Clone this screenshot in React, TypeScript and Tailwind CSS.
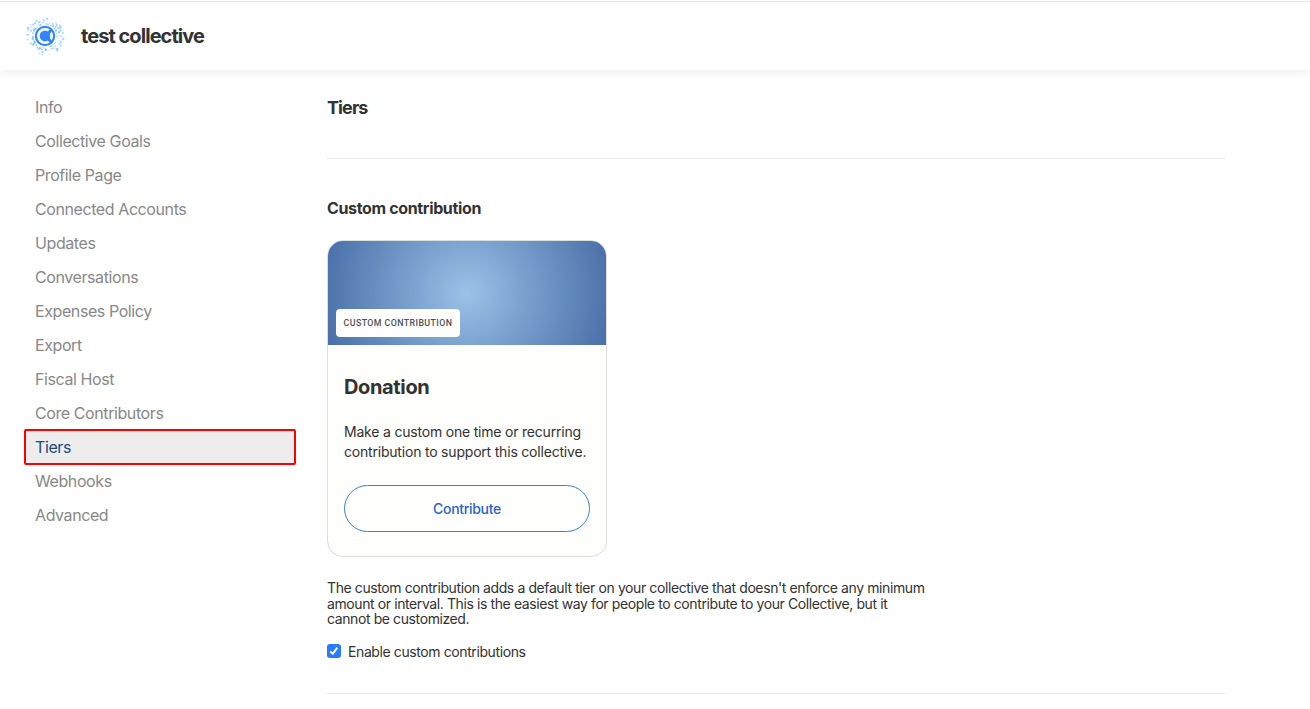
const navItems = [
  'Info',
  'Collective Goals',
  'Profile Page',
  'Connected Accounts',
  'Updates',
  'Conversations',
  'Expenses Policy',
  'Export',
  'Fiscal Host',
  'Core Contributors',
  'Tiers',
  'Webhooks',
  'Advanced',
];

const dots = Array.from({ length: 165 }, (_, i) => {
  const b = Math.abs(Math.sin(i * 78.233) * 24634.6345) % 1;
  const c = Math.abs(Math.sin(i * 39.425) * 11257.113) % 1;
  const angle = i * 2.39996 + c * 0.5;
  const radius = 11.5 + b ** 1.6 * 7.5;
  return {
    x: 20 + Math.cos(angle) * radius,
    y: 20 + Math.sin(angle) * radius,
    size: 1 + c * 0.9,
    opacity: 0.2 + c * 0.33,
  };
});

function Logo() {
  return (
    <svg className="size-10 shrink-0" viewBox="0 0 40 40" aria-hidden="true">
      {dots.map((d, i) => (
        <rect key={i} x={d.x - d.size / 2} y={d.y - d.size / 2} width={d.size} height={d.size} fill="#55aef8" opacity={d.opacity} />
      ))}
      <circle cx="20" cy="20" r="10.8" fill="#fff" />
      <circle cx="20" cy="20" r="9.1" fill="none" stroke="#3385ff" strokeWidth="2.2" />
      <circle cx="20" cy="20" r="5.4" fill="#3385ff" />
      <path d="M22 16.5 L25 13 L27 15 L24.5 18.5 Z M22 23.5 L25 27 L27 25 L24.5 21.5 Z" fill="#3385ff" />
      <path d="M26.2 17 Q27 20 26.2 23" fill="none" stroke="#fff" strokeWidth="1.6" />
    </svg>
  );
}

function ContributionCard() {
  return (
    <article className="flex h-[317px] w-[280px] flex-col overflow-hidden rounded-2xl border border-[#dcdedf] bg-[#fefefc]">
      <div className="flex h-[104px] shrink-0 items-end bg-[radial-gradient(circle_at_center,#9cc2e9_0%,#79a0cd_40%,#4a6fa9_100%)] p-2">
        <span className="flex h-7 w-[124px] items-center justify-center rounded bg-[#fefefc] pt-px font-['Roboto',sans-serif] text-[8.8px] font-medium tracking-[0.42px] whitespace-nowrap text-[#4e5052]">
          CUSTOM CONTRIBUTION
        </span>
      </div>
      <div className="flex flex-col px-4 pt-7">
        <h3 className="text-[20px] leading-7 font-bold tracking-[-0.35px] text-[#313233]">Donation</h3>
        <p className="mt-[21px] text-[14px] leading-5 tracking-[-0.2px] whitespace-nowrap text-[#313233]">
          Make a custom one time or recurring
          <br />
          contribution to support this collective.
        </p>
        <button className="mt-[23px] h-[47px] w-[246px] rounded-full border border-[#3d7edb] text-[14px] font-medium tracking-[-0.3px] text-[#2c63c9]">
          Contribute
        </button>
      </div>
    </article>
  );
}

export default function App() {
  return (
    <div className="h-[709px] w-full overflow-hidden bg-white pt-px font-['Inter',sans-serif] text-[#313233]">
      <header className="flex h-[69px] items-center border-t border-[#e6e8ea] bg-white pl-[25px] shadow-[0_4px_8px_rgba(20,20,20,0.05)]">
        <Logo />
        <h1 className="ml-4 text-[20px] leading-7 font-bold tracking-[-0.95px]">test collective</h1>
      </header>
      <div className="flex">
        <nav className="w-[327px] shrink-0 pt-5 pl-6">
          <ul>
            {navItems.map((item) => (
              <li
                key={item}
                className={
                  item === 'Tiers'
                    ? '-my-px h-9 w-[272px] rounded-[2px] border-2 border-[#ff0000] bg-[#ededed] pl-[9px] text-[16px] leading-8 tracking-[-0.4px] text-[#194b7c]'
                    : 'h-[34px] pl-[11px] text-[16px] leading-[34px] tracking-[-0.41px] text-[#888]'
                }
              >
                {item}
              </li>
            ))}
          </ul>
        </nav>
        <main className="w-[898px] shrink-0 pt-[26px]">
          <h2 className="text-[18px] leading-6 font-bold tracking-[-0.9px]">Tiers</h2>
          <hr className="mt-[38px] border-[#e8e9eb]" />
          <h2 className="mt-[37px] mb-5 text-[16px] leading-6 font-bold tracking-[-0.35px]">Custom contribution</h2>
          <ContributionCard />
          <p className="mt-[23px] text-[14px] leading-[15.6px] tracking-[-0.4px] whitespace-nowrap">
            The custom contribution adds a default tier on your collective that doesn't enforce any minimum
            <br />
            amount or interval. This is the easiest way for people to contribute to your Collective, but it
            <br />
            cannot be customized.
          </p>
          <div className="mt-[13px] flex h-6 items-center gap-[7px]">
            <span className="-mt-0.5 flex size-[14px] items-center justify-center rounded-[3px] bg-[#277bff]">
              <svg viewBox="0 0 14 14" className="size-[14px]" fill="none" stroke="#fff" strokeWidth="2">
                <path d="M3.3 7.4 L5.8 9.8 L10.3 3.7" />
              </svg>
            </span>
            <span className="text-[14px] leading-5 tracking-[-0.4px]">Enable custom contributions</span>
          </div>
          <hr className="mt-[29px] border-[#e8e9eb]" />
        </main>
      </div>
    </div>
  );
}
